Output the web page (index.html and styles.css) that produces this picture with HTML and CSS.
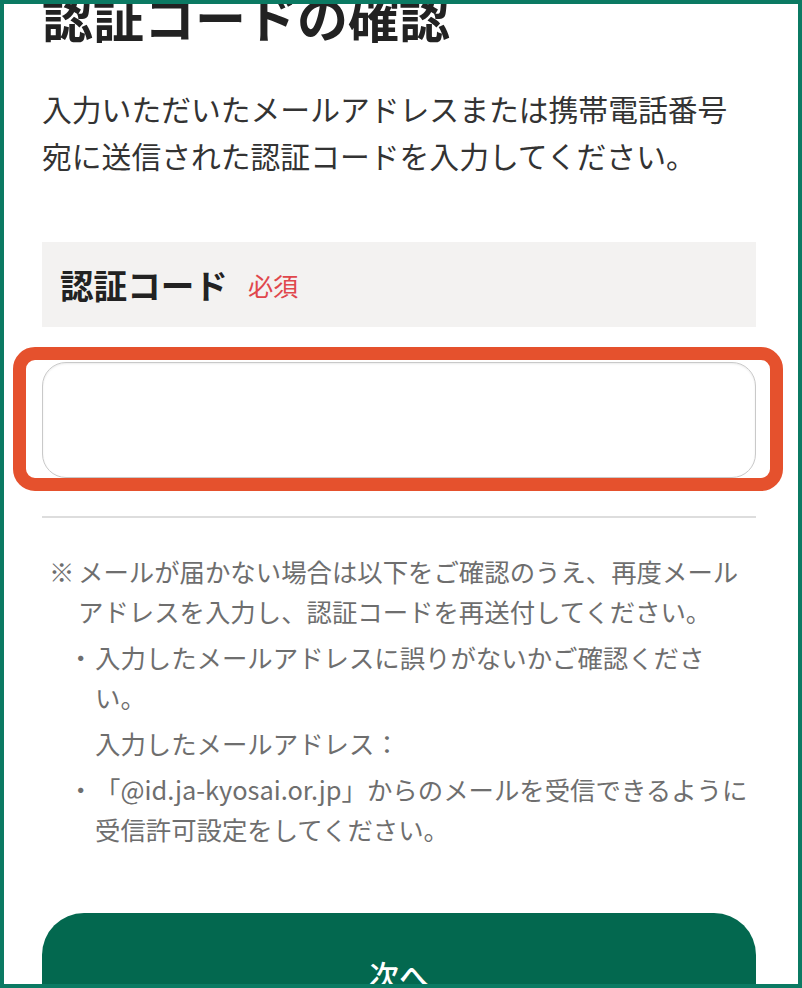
FILE: index.html
```html
<!DOCTYPE html>
<html lang="ja">
<head>
  <meta charset="UTF-8" />
  <meta name="viewport" content="width=device-width, initial-scale=1.0" />
  <title>認証コードの確認</title>
  <link rel="stylesheet" href="styles.css">
</head>
<body>
  <div class="frame">
    <div class="page">
      <h1 class="page-title">認証コードの確認</h1>
      <p class="lead">入力いただいたメールアドレスまたは携帯電話番号宛に送信された認証コードを入力してください。</p>

      <div class="field-label">
        <span class="label-text">認証コード</span>
        <span class="required">必須</span>
      </div>
      <div class="input-wrap">
        <input type="text" class="code-input" />
      </div>

      <hr class="divider" />

      <div class="notes">
        <p class="note-main"><span class="mark">※</span><span>メールが届かない場合は以下をご確認のうえ、再度メールアドレスを入力し、認証コードを再送付してください。</span></p>
        <p class="note-item"><span class="dot">・</span><span>入力したメールアドレスに誤りがないかご確認ください。</span></p>
        <p class="note-sub">入力したメールアドレス：</p>
        <p class="note-item"><span class="dot">・</span><span>「@id.ja-kyosai.or.jp」からのメールを受信できるように受信許可設定をしてください。</span></p>
      </div>

      <button class="next-btn">次へ</button>
    </div>
  </div>
</body>
</html>
```

FILE: styles.css
```css
* {
  box-sizing: border-box;
  margin: 0;
  padding: 0;
  font-family: "Noto Sans CJK JP", "Noto Sans", sans-serif;
}

body {
  background: #fff;
}

.frame {
  width: 802px;
  height: 988px;
  border: 4px solid #0b7a63;
  overflow: hidden;
}

.page {
  padding: 0 42px 0 38px;
}

.page-title {
  margin-top: -18px;
  font-size: 51px;
  line-height: 60px;
  font-weight: 700;
  color: #222;
}

.lead {
  margin-top: 39px;
  font-size: 29.8px;
  line-height: 47px;
  color: #333;
}

.field-label {
  margin-top: 63px;
  height: 85px;
  background: #f3f2f1;
  display: flex;
  align-items: center;
  padding-left: 18px;
}

.label-text {
  font-size: 33.6px;
  font-weight: 700;
  color: #222;
}

.required {
  margin-left: 20px;
  font-size: 25.2px;
  color: #e0474c;
}

.input-wrap {
  position: relative;
  margin-top: 35px;
}

.input-wrap::after {
  content: "";
  position: absolute;
  top: -15px;
  left: -29px;
  right: -27px;
  bottom: -13px;
  border: 13px solid #e5512d;
  border-radius: 22px;
  pointer-events: none;
}

.code-input {
  display: block;
  width: 100%;
  height: 116px;
  border: 1px solid #c9c9c9;
  border-radius: 24px;
  background: #fff;
  box-shadow: inset 0 1px 2px rgba(0, 0, 0, 0.08);
  font-size: 30px;
  padding: 0 20px;
}

.divider {
  margin-top: 38px;
  border: none;
  height: 2px;
  background: #dddddd;
}

.notes {
  margin-top: 33px;
  padding-right: 6px;
  font-size: 25.4px;
  line-height: 40px;
  color: #6e6e6e;
}

.notes p {
  display: flex;
  margin-bottom: 6px;
}

.note-main .mark {
  flex: 0 0 36px;
  padding-left: 7px;
}

.note-item {
  padding-left: 26px;
}

.note-item .dot {
  flex: 0 0 27px;
}

.note-sub {
  padding-left: 53px;
}

.next-btn {
  display: block;
  width: 100%;
  height: 122px;
  margin-top: 64px;
  border: none;
  border-radius: 42px;
  background: #03684f;
  color: #fff;
  font-size: 30px;
  font-weight: 500;
}
```
